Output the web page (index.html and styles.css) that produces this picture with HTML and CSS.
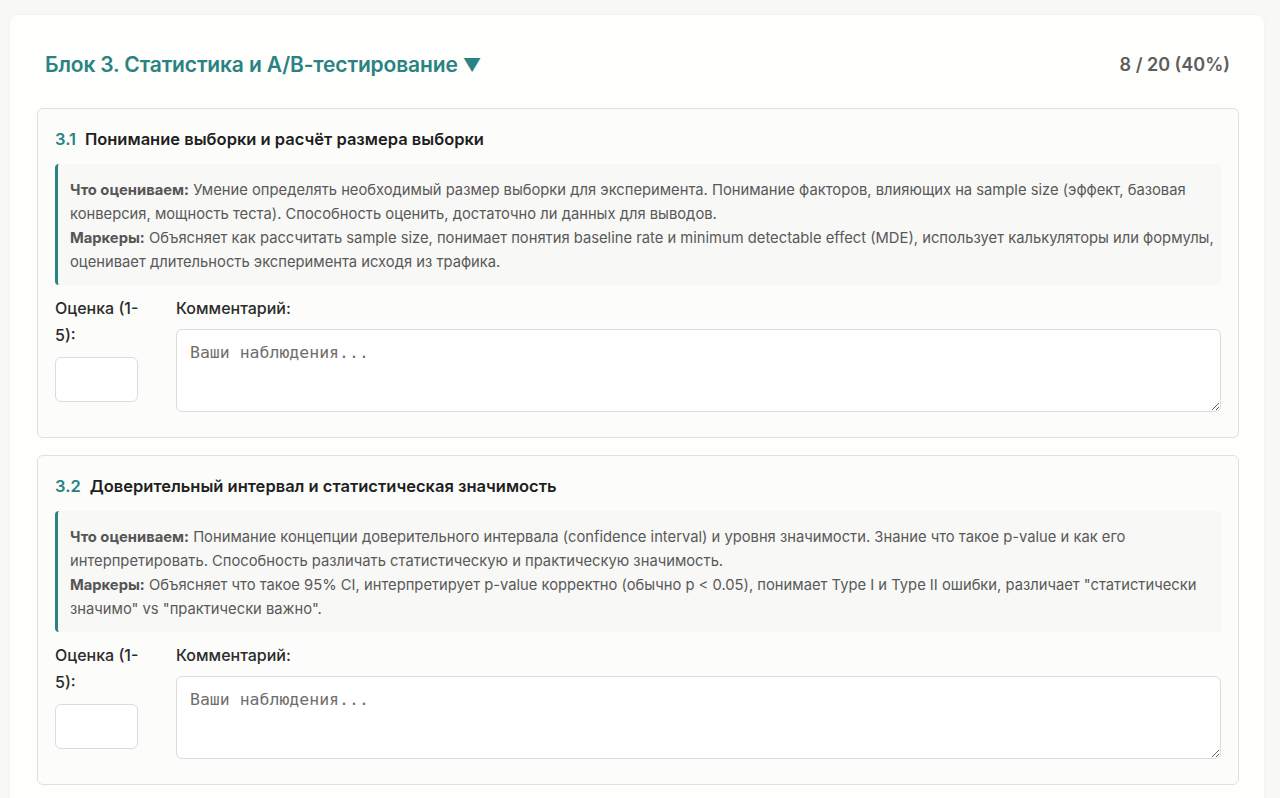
FILE: index.html
```html
<!DOCTYPE html>
<html lang="ru">
<head>
<meta charset="utf-8">
<title>Блок 3</title>
<link rel="stylesheet" href="styles.css">
</head>
<body>
<section class="panel">
  <header class="block-head">
    <h2 class="block-title">Блок 3. Статистика и A/B-тестирование <span class="caret">▼</span></h2>
    <div class="block-score">8 / 20 (40%)</div>
  </header>

  <div class="card">
    <h3 class="card-title"><span class="num">3.1</span>Понимание выборки и расчёт размера выборки</h3>
    <div class="desc">
      <b>Что оцениваем:</b> Умение определять необходимый размер выборки для эксперимента. Понимание факторов, влияющих на sample size (эффект, базовая конверсия, мощность теста). Способность оценить, достаточно ли данных для выводов.<br>
      <b>Маркеры:</b> Объясняет как рассчитать sample size, понимает понятия baseline rate и minimum detectable effect (MDE), использует калькуляторы или формулы, оценивает длительность эксперимента исходя из трафика.
    </div>
    <div class="fields">
      <div class="rating">
        <label class="lbl">Оценка (1-5):</label>
        <input class="score" type="text">
      </div>
      <div class="comment">
        <label class="lbl">Комментарий:</label>
        <textarea class="ta" placeholder="Ваши наблюдения..."></textarea>
      </div>
    </div>
  </div>

  <div class="card">
    <h3 class="card-title"><span class="num">3.2</span>Доверительный интервал и статистическая значимость</h3>
    <div class="desc">
      <b>Что оцениваем:</b> Понимание концепции доверительного интервала (confidence interval) и уровня значимости. Знание что такое p-value и как его интерпретировать. Способность различать статистическую и практическую значимость.<br>
      <b>Маркеры:</b> Объясняет что такое 95% CI, интерпретирует p-value корректно (обычно p &lt; 0.05), понимает Type I и Type II ошибки, различает "статистически значимо" vs "практически важно".
    </div>
    <div class="fields">
      <div class="rating">
        <label class="lbl">Оценка (1-5):</label>
        <input class="score" type="text">
      </div>
      <div class="comment">
        <label class="lbl">Комментарий:</label>
        <textarea class="ta" placeholder="Ваши наблюдения..."></textarea>
      </div>
    </div>
  </div>
</section>
</body>
</html>
```
FILE: styles.css
```css
html, body {
  margin: 0;
  padding: 0;
}
body {
  background: #f8f8f4;
  font-family: Inter, "Liberation Sans", sans-serif;
  color: #333;
  overflow: hidden;
  height: 798px;
}
.panel {
  margin: 15px 16px 0 10px;
  background: #fefefc;
  border-radius: 8px;
  box-shadow: 0 0 3px rgba(0,0,0,0.06);
  padding: 35px 25px 40px 27px;
  min-height: 900px;
}
.block-head {
  display: flex;
  justify-content: space-between;
  align-items: center;
  padding: 0 9px 0 8px;
  height: 28px;
  margin-bottom: 30px;
}
.block-title {
  margin: 0;
  font-size: 21px;
  font-weight: 600;
  color: #2a8282;
  letter-spacing: -0.15px;
}
.caret {
  font-size: 18px;
}
.block-score {
  font-size: 18px;
  font-weight: 600;
  color: #5d5d5d;
}
.card {
  background: #fcfcfa;
  border: 1px solid #e0e0de;
  border-radius: 6px;
  padding: 20px 17px 25px 17px;
  margin-bottom: 17px;
}
.card-title {
  margin: 0;
  font-size: 16.5px;
  line-height: 20px;
  font-weight: 600;
  color: #1f1f1f;
}
.num {
  color: #2a8282;
  margin-right: 9px;
}
.desc {
  margin-top: 15px;
  background: #f8f8f6;
  border-left: 3px solid #2a8282;
  border-radius: 4px 0 0 4px;
  padding: 14px 4px 11px 12px;
  font-size: 14.75px;
  line-height: 24px;
  color: #595959;
}
.desc b {
  color: #555;
  font-weight: 700;
}
.fields {
  display: flex;
  align-items: flex-start;
  gap: 26px;
  margin-top: 10px;
}
.rating {
  width: 95px;
  flex: none;
}
.lbl {
  display: block;
  font-size: 16px;
  line-height: 27px;
  font-weight: 500;
  color: #2b2b2b;
}
.score {
  display: block;
  box-sizing: border-box;
  width: 83px;
  height: 45px;
  margin-top: 8px;
  border: 1px solid #dcdcdc;
  border-radius: 6px;
  background: #fff;
}
.comment {
  flex: 1;
  display: flex;
  flex-direction: column;
}
.ta {
  box-sizing: border-box;
  width: 100%;
  height: 83px;
  margin-top: 7px;
  border: 1px solid #dcdcdc;
  border-radius: 6px;
  background: #fff;
  padding: 13px 13px;
  font-family: "DejaVu Sans Mono", "Liberation Mono", monospace;
  font-size: 16.5px;
  line-height: 20px;
}
.ta::placeholder {
  color: #6e6e6e;
}
```
